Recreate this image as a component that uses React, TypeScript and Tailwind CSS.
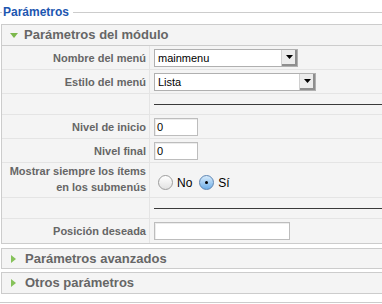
import React from 'react'

const FONT = { fontFamily: '"Liberation Sans", Arial, sans-serif' }

function TriDown() {
  return (
    <svg width="8" height="5" viewBox="0 0 8 5" className="mr-[6px] mt-[1px]">
      <path d="M0 0 H8 L4 5 Z" fill="#7cb84c" />
    </svg>
  )
}

function TriRight() {
  return (
    <svg width="5" height="8" viewBox="0 0 5 8" className="mr-[9px]">
      <path d="M0 0 L5 4 L0 8 Z" fill="#86c25a" />
    </svg>
  )
}

function FakeSelect({ value, width }: { value: string; width: string }) {
  return (
    <div className={`flex h-[18px] ${width} border border-[#b0b0b0] bg-white`}>
      <span className="flex-1 pl-[3px] text-[11px] leading-[16px] text-black">{value}</span>
      <span className="flex w-[16px] items-center justify-center border-l border-[#d0d0d0] bg-[#ececec] shadow-[inset_-2px_-2px_0_#8e8e8e]">
        <svg width="7" height="4" viewBox="0 0 7 4" className="-ml-[1px] -mt-[1px]">
          <path d="M0 0 H7 L3.5 4 Z" fill="#000" />
        </svg>
      </span>
    </div>
  )
}

function TextInput({ value, width }: { value: string; width: string }) {
  return (
    <div className={`h-[18px] ${width} border border-[#bdbdbd] bg-white pl-[2px] text-[11px] leading-[16px] text-black shadow-[inset_1px_1px_0_#ececec]`}>
      {value}
    </div>
  )
}

function Radio({ checked }: { checked?: boolean }) {
  if (checked) {
    return (
      <span className="flex h-[15px] w-[15px] items-center justify-center rounded-full border border-[#5f86b3] bg-gradient-to-b from-[#d7ebfb] to-[#6eaee6]">
        <span className="block h-[3px] w-[3px] rounded-full bg-black" />
      </span>
    )
  }
  return <span className="block h-[15px] w-[15px] rounded-full border border-[#9d9d9d] bg-gradient-to-b from-white to-[#e2e2e2]" />
}

function Row({ h, label, last, children }: { h: string; label?: React.ReactNode; last?: boolean; children?: React.ReactNode }) {
  return (
    <div className={`flex ${h} ${last ? '' : 'border-b border-[#e4e4e4]'}`}>
      <div className="flex w-[148px] items-center justify-end border-r border-[#e4e4e4] pr-[3px] text-right text-[11px] font-bold leading-[16px] text-[#666]">
        {label}
      </div>
      <div className="flex flex-1 items-center pl-[4px]">{children}</div>
    </div>
  )
}

function Rule() {
  return <div className="h-px w-full bg-[#3a3a3a]" />
}

export default function App() {
  return (
    <div className="relative h-[304px] w-[382px] overflow-hidden bg-white" style={FONT}>
      <div className="w-[420px]">
        <div className="flex h-[24px] items-start">
          <span className="mt-[12px] h-px w-[2px] bg-[#ccc]" />
          <span className="px-[1px] text-[12px] font-bold leading-[24px] text-[#1d56b0]">Parámetros</span>
          <span className="ml-[3px] mt-[12px] h-px flex-1 bg-[#ccc]" />
        </div>

        <div className="ml-[1px] border border-[#ccc] bg-[#f4f4f4]">
          <div className="flex h-[21px] items-center border-b border-[#ccc] pl-[8px] text-[13px] font-bold leading-[20px] text-[#666]">
            <TriDown />
            Parámetros del módulo
          </div>
          <Row h="h-[24px]" label="Nombre del menú">
            <FakeSelect value="mainmenu" width="w-[144px]" />
          </Row>
          <Row h="h-[24px]" label="Estilo del menú">
            <FakeSelect value="Lista" width="w-[162px]" />
          </Row>
          <Row h="h-[21px]">
            <Rule />
          </Row>
          <Row h="h-[24px]" label="Nivel de inicio">
            <TextInput value="0" width="w-[44px]" />
          </Row>
          <Row h="h-[24px]" label="Nivel final">
            <TextInput value="0" width="w-[44px]" />
          </Row>
          <Row
            h="h-[35px]"
            label={
              <span className="pb-[2px]">
                Mostrar siempre los ítems
                <br />
                en los submenús
              </span>
            }
          >
            <div className="flex items-center pt-[5px] text-[12px] text-black">
              <span className="ml-[4px]">
                <Radio />
              </span>
              <span className="ml-[4px]">No</span>
              <span className="ml-[7px]">
                <Radio checked />
              </span>
              <span className="ml-[4px]">Sí</span>
            </div>
          </Row>
          <Row h="h-[21px]">
            <Rule />
          </Row>
          <Row h="h-[24px]" label="Posición deseada" last>
            <TextInput value="" width="w-[136px]" />
          </Row>
        </div>

        <div className="ml-[1px] mt-[4px] flex h-[21px] items-center border border-[#ccc] bg-[#f4f4f4] pl-[9px] text-[13px] font-bold text-[#666]">
          <TriRight />
          Parámetros avanzados
        </div>
        <div className="ml-[1px] mt-[3px] flex h-[22px] items-center border border-[#ccc] bg-[#f4f4f4] pl-[9px] text-[13px] font-bold text-[#666]">
          <TriRight />
          Otros parámetros
        </div>
        <div className="mt-[8px] h-px bg-[#ccc]" />
      </div>
    </div>
  )
}
